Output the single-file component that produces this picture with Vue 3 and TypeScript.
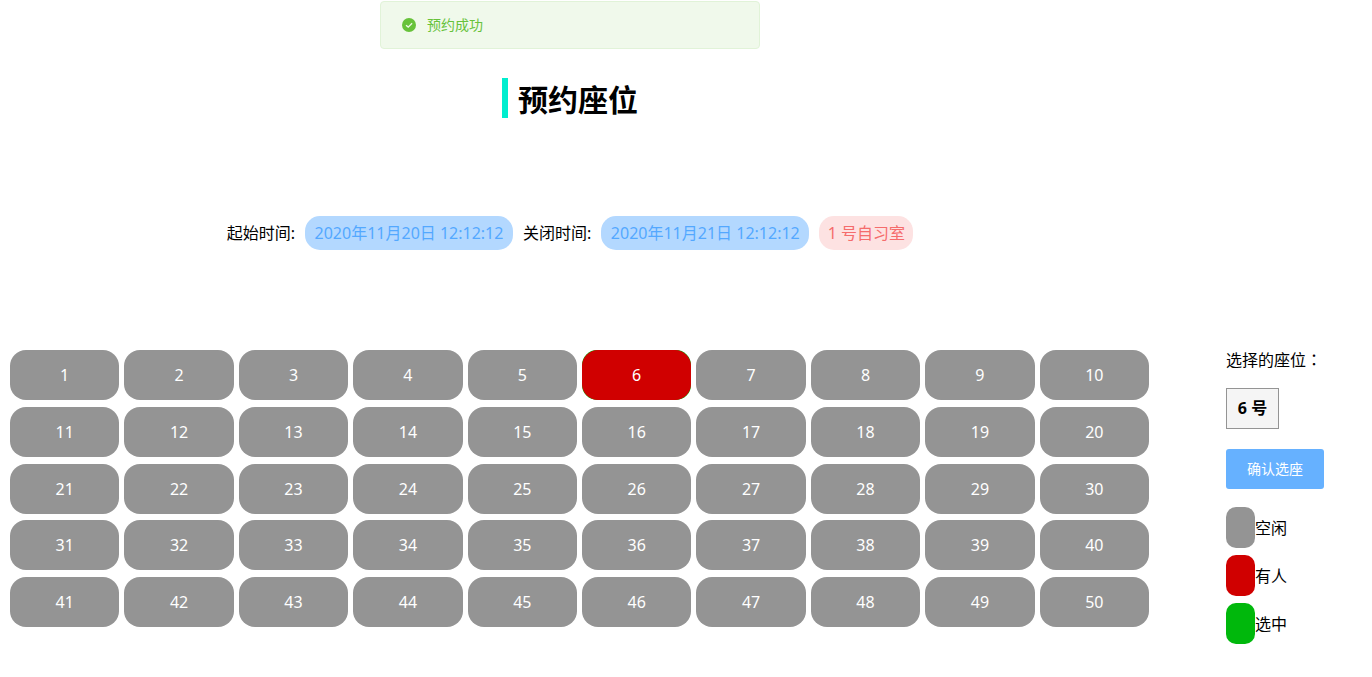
<script setup lang="ts">
import { ref } from 'vue'

type SeatState = 'free' | 'taken'

interface Seat {
  id: number
  state: SeatState
}

const seats = ref<Seat[]>(
  Array.from({ length: 50 }, (_, i): Seat => ({ id: i + 1, state: i === 5 ? 'taken' : 'free' }))
)
const selected = ref(6)

const legend = [
  { kind: 'free', label: '空闲' },
  { kind: 'taken', label: '有人' },
  { kind: 'chosen', label: '选中' }
]

function pick(seat: Seat) {
  if (seat.state === 'free') selected.value = seat.id
}
</script>

<template>
  <div class="page">
    <header class="top">
      <div class="message" role="alert">
        <svg class="message-icon" viewBox="0 0 14 14" aria-hidden="true">
          <circle cx="7" cy="7" r="7" fill="#67c23a" />
          <path d="M4 7.2 6.2 9.1 10.1 5.2" fill="none" stroke="#f0f9eb" stroke-width="1.3" />
        </svg>
        <span>预约成功</span>
      </div>
      <h1 class="title">预约座位</h1>
      <div class="info">
        <span>起始时间:</span>
        <span class="pill time">2020年11月20日 12:12:12</span>
        <span>关闭时间:</span>
        <span class="pill time">2020年11月21日 12:12:12</span>
        <span class="pill room">1 号自习室</span>
      </div>
    </header>

    <main class="content">
      <div class="seats">
        <button
          v-for="seat in seats"
          :key="seat.id"
          type="button"
          class="seat"
          :class="{ chosen: seat.id === selected }"
          @click="pick(seat)"
        >
          <span class="seat-face" :class="seat.state">{{ seat.id }}</span>
        </button>
      </div>

      <aside class="side">
        <div class="side-label">选择的座位：</div>
        <div class="current">{{ selected }} 号</div>
        <button type="button" class="confirm">确认选座</button>
        <ul class="legend">
          <li v-for="item in legend" :key="item.kind">
            <span class="swatch" :class="item.kind"></span>
            <span>{{ item.label }}</span>
          </li>
        </ul>
      </aside>
    </main>
  </div>
</template>

<style>
body {
  margin: 0;
  background: #fff;
}
</style>

<style scoped>
.page {
  font-family: "Noto Sans", "Noto Sans CJK SC", sans-serif;
  font-size: 16px;
  line-height: 24px;
  color: #000;
  padding: 1px 0 32px;
}

.top {
  display: flex;
  flex-direction: column;
  align-items: center;
  margin-right: 232px;
}

.message {
  box-sizing: border-box;
  display: flex;
  align-items: center;
  gap: 11px;
  width: 380px;
  height: 48px;
  padding: 0 21px;
  border: 1px solid #e1f3d8;
  border-radius: 4px;
  background: #f0f9eb;
  color: #67c23a;
  font-size: 14px;
}

.message-icon {
  width: 14px;
  height: 14px;
}

.title {
  margin: 29px 0 98px;
  padding: 4px 0 0 10px;
  border-left: 6px solid #00eecf;
  font-size: 30px;
  line-height: 36px;
  font-weight: 700;
}

.info {
  display: flex;
  align-items: center;
  gap: 10px;
  white-space: nowrap;
}

.pill {
  box-sizing: border-box;
  padding: 5px 8px;
  border-radius: 15px;
  text-align: center;
}

.time {
  min-width: 208px;
  background: #b3d8ff;
  color: #53a8ff;
}

.room {
  min-width: 94px;
  background: #fde2e2;
  color: #f56c6c;
}

.content {
  display: grid;
  grid-template-columns: minmax(0, 1fr) 146px;
  align-items: start;
  gap: 77px;
  margin-top: 100px;
  padding-left: 10px;
}

.seats {
  display: grid;
  grid-template-columns: repeat(10, minmax(0, 1fr));
  gap: 6px 5px;
  align-content: space-between;
  min-height: 277px;
}

.seat {
  height: 50px;
  padding: 0;
  border: 0;
  border-radius: 15px;
  background: transparent;
  color: #fff;
  font: inherit;
  cursor: pointer;
}

.seat-face {
  display: block;
  border-radius: 16px;
  line-height: 50px;
}

.free {
  background: #949494;
}

.taken {
  background: #d00000;
}

.chosen {
  background: #00b80c;
}

.side {
  display: flex;
  flex-direction: column;
  align-items: flex-start;
}

.side-label {
  font-family: "Noto Sans", "Noto Sans CJK TC", sans-serif;
  line-height: 20px;
}

.current {
  box-sizing: border-box;
  min-width: 53px;
  margin-top: 18px;
  padding: 0 10px;
  border: 1px solid #949494;
  background: #f5f5f5;
  font-weight: 700;
  line-height: 39px;
  text-align: center;
}

.confirm {
  height: 40px;
  margin-top: 20px;
  padding: 0 21px;
  border: 0;
  border-radius: 3px;
  background: #66b1ff;
  color: #fff;
  font: inherit;
  font-size: 14px;
  font-weight: 400;
  cursor: pointer;
}

.legend {
  display: flex;
  flex-direction: column;
  gap: 7px;
  margin: 18px 0 0;
  padding: 0;
  list-style: none;
}

.legend li {
  display: flex;
  align-items: center;
}

.swatch {
  width: 29px;
  height: 41px;
  border-radius: 10px;
}
</style>
